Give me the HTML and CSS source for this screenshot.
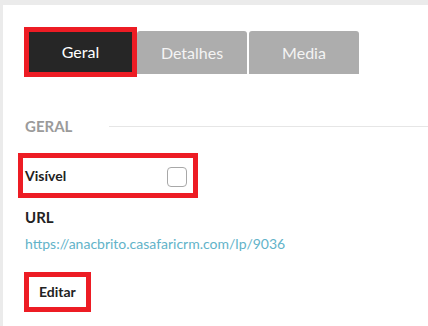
FILE: index.html
```html
<!DOCTYPE html>
<html lang="pt">
<head>
    <meta charset="UTF-8">
    <meta name="viewport" content="width=device-width, initial-scale=1.0">
    <title>Geral</title>
    <link rel="stylesheet" href="styles.css">
</head>
<body>

    <div class="panel">
        <div class="tabs">
            <div class="tab-mark">
                <a href="#" class="tab active">Geral</a>
            </div>
            <a href="#" class="tab">Detalhes</a>
            <a href="#" class="tab">Media</a>
        </div>

        <div class="section-title">
            <span>GERAL</span>
            <div class="rule"></div>
        </div>

        <div class="field-mark">
            <label class="check-row">
                <span>Visível</span>
                <span class="checkbox"></span>
            </label>
        </div>

        <h3 class="label">URL</h3>
        <a href="#" class="url">https://anacbrito.casafaricrm.com/lp/9036</a>

        <div class="edit-mark">
            <a href="#" class="edit-btn">Editar</a>
        </div>
    </div>

</body>
</html>
```

FILE: styles.css
```css
body {
    margin: 0;
    background-color: #ebebeb;
    font-family: Lato, "Open Sans", sans-serif;
}
.panel {
    margin: 5px 0 0 3px;
    height: 321px;
    background-color: #fff;
    padding: 22px 0 0 21px;
    box-sizing: border-box;
}
.tabs {
    display: flex;
    align-items: center;
    height: 50px;
}
.tab-mark {
    border: 5px solid #ed1c24;
}
.tab {
    display: block;
    width: 110px;
    height: 43px;
    line-height: 43px;
    background-color: #adadad;
    color: #f4f4f4;
    text-align: center;
    text-decoration: none;
    font-size: 16px;
    border-radius: 3px 3px 0 0;
    margin-left: 2px;
}
.tab-mark + .tab {
    margin-left: 0;
}
.tab.active {
    width: 103px;
    height: 40px;
    line-height: 40px;
    margin-left: 0;
    background-color: #262626;
    color: #fff;
    border-radius: 0;
}
.section-title {
    display: flex;
    align-items: center;
    margin-top: 40px;
    height: 18px;
    font-size: 15px;
    font-weight: bold;
    color: #9b9b9b;
    padding-left: 1px;
}
.rule {
    flex: 1;
    height: 1px;
    background-color: #e6e6e6;
    margin-left: 37px;
}
.field-mark {
    margin: 18px 0 0 -6px;
    width: 162px;
    border: 5px solid #ed1c24;
    padding: 0 6px 0 2px;
}
.check-row {
    display: flex;
    align-items: center;
    justify-content: space-between;
    height: 35px;
    font-size: 14px;
    font-weight: bold;
    color: #222;
}
.checkbox {
    width: 18px;
    height: 18px;
    border: 1px solid #a8a8a8;
    border-radius: 4px;
    margin-top: 3px;
}
.label {
    margin: 10px 0 0 1px;
    font-size: 15px;
    line-height: 18px;
    color: #222;
}
.url {
    display: block;
    margin: 10px 0 0 1px;
    font-size: 14px;
    line-height: 16px;
    color: #62b3c9;
    text-decoration: none;
}
.edit-mark {
    display: inline-block;
    margin-top: 20px;
    border: 5px solid #ed1c24;
}
.edit-btn {
    display: block;
    height: 30px;
    line-height: 30px;
    padding: 0 10px;
    font-size: 14px;
    font-weight: bold;
    color: #222;
    text-decoration: none;
}
```
